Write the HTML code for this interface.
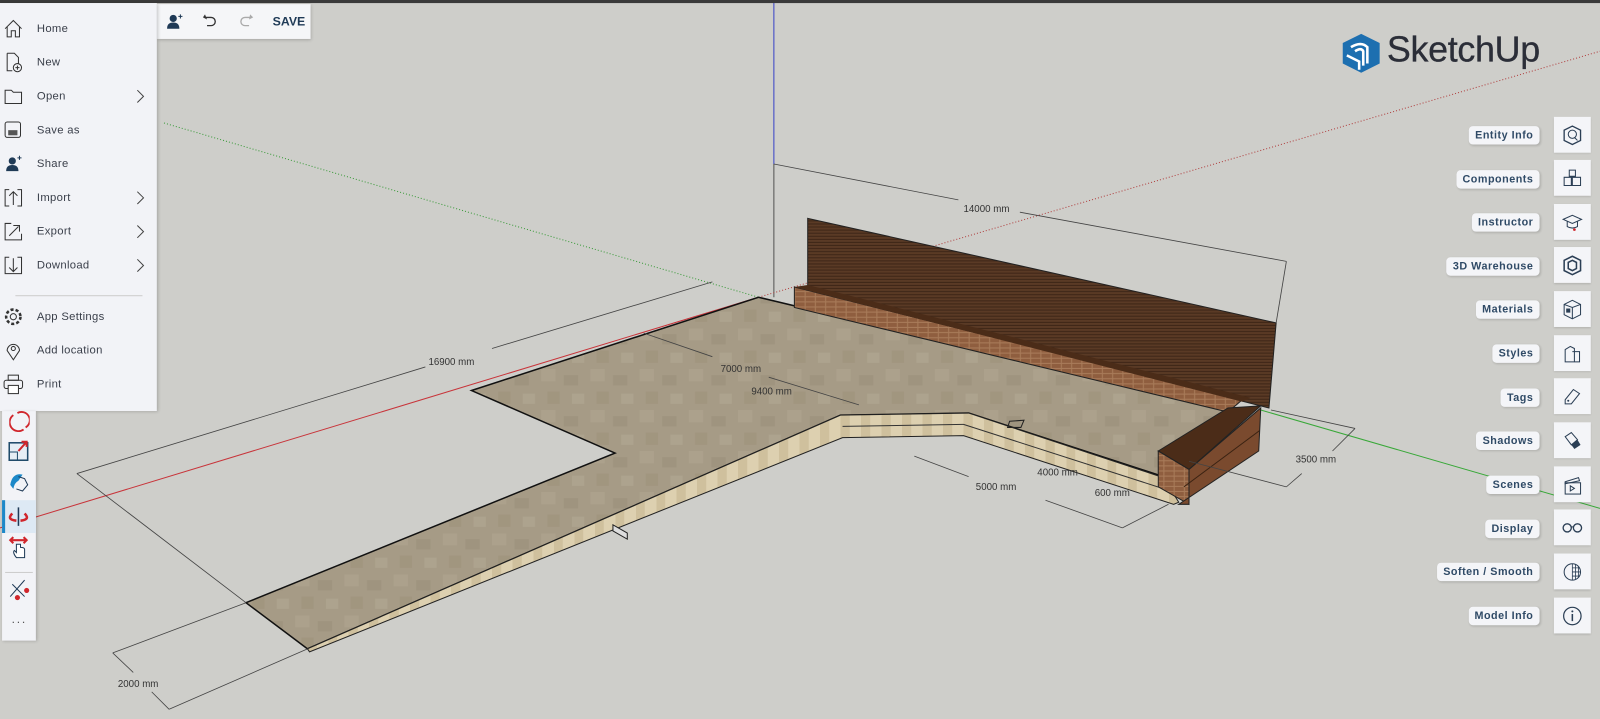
<!DOCTYPE html>
<html><head><meta charset="utf-8">
<style>
html,body{margin:0;padding:0;overflow:hidden;background:#cececa;width:1600px;height:719px}
#w{position:absolute;left:0;top:0;width:1561px;height:701px;transform:scale(1.025);transform-origin:0 0;background:#cececa;font-family:"Liberation Sans",sans-serif}
.top{position:absolute;left:0;top:0;width:1561px;height:3px;background:#3a3a3a}
.menu{position:absolute;left:0;top:3px;width:153px;height:398px;background:#f2f3f7;box-shadow:1px 1px 3px rgba(0,0,0,.2)}
.mi{position:absolute;left:0;width:153px;height:33px;font-size:11px;color:#3a3f4a;letter-spacing:.3px}
.mi span{position:absolute;left:36px;top:10px}
.mi svg{position:absolute;left:3px;top:6px}
.mi .ch{position:absolute;left:131px;top:6px}
.tb{position:absolute;left:153px;top:4px;width:150px;height:34px;background:#f5f6f8;box-shadow:1px 1px 3px rgba(0,0,0,.2)}
.lt{position:absolute;left:2px;top:401px;width:33px;height:224px;background:#f2f3f7;box-shadow:1px 1px 3px rgba(0,0,0,.2)}
.lab{position:absolute;right:59px;height:18px;background:#f4f5f8;border-radius:4px;font-size:10.5px;font-weight:bold;color:#2f4a66;padding:0 6px;line-height:18px;letter-spacing:.5px;box-shadow:1px 1px 2px rgba(0,0,0,.15)}
.ib{position:absolute;left:1516px;width:36px;height:35px;background:#f4f5f8;box-shadow:0 1px 2px rgba(0,0,0,.15)}
.ib svg{position:absolute;left:8px;top:8px}
</style></head><body><div id="w">
<svg width="1561" height="701" style="position:absolute;left:0;top:0">
<defs>
<pattern id="pave" width="48" height="40" patternUnits="userSpaceOnUse">
<rect width="48" height="40" fill="#a69b86"/>
<rect x="0" y="0" width="14" height="12" fill="#aca18c"/><rect x="22" y="6" width="14" height="10" fill="#9f947f"/>
<rect x="6" y="22" width="12" height="12" fill="#a1967f"/><rect x="30" y="24" width="12" height="10" fill="#ada38e"/>
</pattern>
<pattern id="wall" width="6" height="3" patternUnits="userSpaceOnUse">
<rect width="6" height="3" fill="#5a3a25"/><rect y="2" width="6" height="1" fill="#3e2617"/>
</pattern>
<pattern id="brick" width="10" height="5" patternUnits="userSpaceOnUse">
<rect width="10" height="5" fill="#8f5e3f"/><rect y="4" width="10" height="1" fill="#a97c5a"/><rect x="5" width="1" height="4" fill="#a97c5a"/>
</pattern>
<pattern id="step" width="20" height="10" patternUnits="userSpaceOnUse">
<rect width="20" height="10" fill="#ddd0b0"/><rect x="0" width="9" height="10" fill="#cfc09d"/>
</pattern>
</defs>
<line x1="755" y1="0" x2="755" y2="160" stroke="#3a44c8" stroke-width="1"/>
<line x1="755" y1="160" x2="755" y2="290" stroke="#555" stroke-width="1"/>
<line x1="0" y1="515" x2="740" y2="290" stroke="#c8343a" stroke-width="1"/>
<line x1="740" y1="290" x2="1561" y2="50" stroke="#b04040" stroke-width="1" stroke-dasharray="1,2"/>
<line x1="160" y1="120" x2="740" y2="290" stroke="#3a9a3a" stroke-width="1" stroke-dasharray="1,2"/>
<line x1="1230" y1="400" x2="1561" y2="496" stroke="#38a838" stroke-width="1"/>
<polygon points="460,381 740,290 1200,400 1135,440 1135,465 945,403 820,405 300,633 240,588 600,442" fill="url(#pave)" stroke="#111" stroke-width="1.5"/>
<polygon points="300,633 820,405 945,403 1135,466 1150,490 1145,492 940,425 822,427 302,636" fill="url(#step)" stroke="#222" stroke-width="1"/>
<line x1="822" y1="416" x2="940" y2="414" stroke="#333"/><line x1="940" y1="414" x2="1145" y2="480" stroke="#333"/>
<polygon points="598,512 612,520 612,526 598,518" fill="#ddd" stroke="#222"/>
<polygon points="788,213 1245,315 1238,398 788,283" fill="url(#wall)" stroke="#222"/>
<polygon points="775,280 1212,390 1198,402 775,300" fill="url(#brick)" stroke="#222"/>
<polygon points="775,280 788,278 1220,388 1212,392" fill="#4b2c18"/>
<polygon points="1130,440 1198,398 1230,396 1160,458" fill="#4b2c18" stroke="#222"/>
<polygon points="1130,440 1160,458 1160,492 1130,475" fill="url(#brick)" stroke="#222"/>
<polygon points="1160,458 1230,398 1228,440 1150,492 1160,492" fill="#7a4a2e" stroke="#222"/>
<line x1="1155" y1="475" x2="1229" y2="420" stroke="#3a2212"/>
<g stroke="#444" stroke-width=".8" fill="none">
<line x1="75" y1="462" x2="415" y2="358"/><line x1="480" y1="340" x2="695" y2="275"/>
<line x1="75" y1="462" x2="240" y2="588"/>
<line x1="110" y1="637" x2="240" y2="588"/><line x1="165" y1="692" x2="300" y2="633"/>
<line x1="110" y1="637" x2="130" y2="656"/><line x1="148" y1="675" x2="165" y2="692"/>
<line x1="755" y1="160" x2="935" y2="195"/><line x1="995" y1="207" x2="1255" y2="255"/>
<line x1="1255" y1="255" x2="1245" y2="315"/>
<line x1="628" y1="325" x2="695" y2="348"/><line x1="750" y1="368" x2="838" y2="395"/>
<line x1="1240" y1="400" x2="1322" y2="418"/><line x1="1322" y1="418" x2="1300" y2="440"/><line x1="1270" y1="462" x2="1255" y2="475"/><line x1="1160" y1="450" x2="1255" y2="475"/>
<line x1="892" y1="445" x2="945" y2="465"/><line x1="1020" y1="488" x2="1095" y2="515"/>
<line x1="1095" y1="515" x2="1140" y2="492"/>
</g>
<g font-size="9.5" fill="#333" font-family="Liberation Sans,sans-serif">
<text x="418" y="356">16900 mm</text><text x="115" y="670">2000 mm</text>
<text x="940" y="207">14000 mm</text><text x="703" y="363">7000 mm</text>
<text x="733" y="385">9400 mm</text><text x="1264" y="451">3500 mm</text>
<text x="952" y="478">5000 mm</text><text x="1012" y="464">4000 mm</text><text x="1068" y="484">600 mm</text>
</g>
<polygon points="985,411 999,410 996,417 983,417" fill="none" stroke="#222"/>
</svg>
<div class="top"></div>
<svg style="position:absolute;left:1308px;top:32px" width="42" height="40" viewBox="0 0 42 40">
<polygon points="20,1 38,10 38,30 20,39 2,30 2,10" fill="#1d6fb0"/>
<path d="M10,14 Q20,8 26,14 L26,30 M14,18 Q20,14 22,18 L22,32 M6,22 L18,28 L18,36" stroke="#fff" stroke-width="2.5" fill="none"/>
</svg>
<div style="position:absolute;left:1353px;top:29px;font-size:35px;color:#2b2e38;letter-spacing:-.3px;-webkit-text-stroke:.3px #2b2e38">SketchUp</div>
<div class="tb">
<svg style="position:absolute;left:9px;top:9px" width="18" height="16"><circle cx="7" cy="5" r="3.5" fill="#1f3a56"/><path d="M1,15 Q1,9 7,9 Q13,9 13,15Z" fill="#1f3a56"/><path d="M14,1v4M12,3h4" stroke="#1f3a56"/></svg>
<svg style="position:absolute;left:44px;top:9px" width="16" height="16"><path d="M3,4 H9 A4,4 0 0 1 9,12 H5" stroke="#333" stroke-width="1.3" fill="none"/><path d="M3,1 L1,4 L5,6Z" fill="#333"/></svg>
<svg style="position:absolute;left:79px;top:9px" width="16" height="16"><path d="M13,4 H7 A4,4 0 0 0 7,12 H11" stroke="#aaa" stroke-width="1.3" fill="none"/><path d="M12,1 L15,4 L11,6Z" fill="#aaa"/></svg>
<div style="position:absolute;left:113px;top:10px;font-size:12px;font-weight:bold;color:#1f3a56">SAVE</div>
</div>
<div class="menu">
<div class="mi" style="top:9px"><svg width="20" height="20"><path d="M2,10 L10,2 L18,10 M4,8 V18 H8 V12 H12 V18 H16 V8" stroke="#333" fill="none"/></svg><span>Home</span></div>
<div class="mi" style="top:42px"><svg width="20" height="20"><path d="M4,1 H11 L15,5 V11 M9,18 H4 V1" stroke="#333" fill="none"/><circle cx="14" cy="15" r="4" stroke="#333" fill="none"/><path d="M12,15h4M14,13v4" stroke="#333"/></svg><span>New</span></div>
<div class="mi" style="top:75px"><svg width="20" height="20"><path d="M2,4 H8 L10,6 H18 V17 H2Z" stroke="#333" fill="none"/></svg><span>Open</span><svg class="ch" width="12" height="20"><path d="M3,4 L9,10 L3,16" stroke="#444" fill="none"/></svg></div>
<div class="mi" style="top:108px"><svg width="20" height="20"><rect x="2" y="2" width="15" height="15" rx="2" stroke="#333" fill="none"/><rect x="5" y="10" width="9" height="5" fill="#555"/></svg><span>Save as</span></div>
<div class="mi" style="top:141px"><svg width="20" height="20"><circle cx="9" cy="7" r="3.5" fill="#1f3a56"/><path d="M3,17 Q3,11 9,11 Q15,11 15,17Z" fill="#1f3a56"/><path d="M16,2v4M14,4h4" stroke="#1f3a56"/></svg><span>Share</span></div>
<div class="mi" style="top:174px"><svg width="20" height="20"><path d="M6,2 H2 V18 H6 M14,2 H18 V18 H14 M10,17 V4 M6,8 L10,4 L14,8" stroke="#333" fill="none"/></svg><span>Import</span><svg class="ch" width="12" height="20"><path d="M3,4 L9,10 L3,16" stroke="#444" fill="none"/></svg></div>
<div class="mi" style="top:207px"><svg width="20" height="20"><path d="M8,2 H2 V18 H18 V12 M6,14 L15,5 M10,4 H16 V10" stroke="#333" fill="none"/></svg><span>Export</span><svg class="ch" width="12" height="20"><path d="M3,4 L9,10 L3,16" stroke="#444" fill="none"/></svg></div>
<div class="mi" style="top:240px"><svg width="20" height="20"><path d="M6,2 H2 V18 H18 V2 H14 M10,3 V16 M6,12 L10,16 L14,12" stroke="#333" fill="none"/></svg><span>Download</span><svg class="ch" width="12" height="20"><path d="M3,4 L9,10 L3,16" stroke="#444" fill="none"/></svg></div>
<div style="position:absolute;left:15px;top:285px;width:124px;height:1px;background:#ccc"></div>
<div class="mi" style="top:290px"><svg width="20" height="20"><circle cx="10" cy="10" r="3" stroke="#333" fill="none"/><circle cx="10" cy="10" r="7" stroke="#333" stroke-dasharray="3,2" stroke-width="2.5" fill="none"/></svg><span>App Settings</span></div>
<div class="mi" style="top:323px"><svg width="20" height="20"><path d="M10,19 L4,10 A6,6 0 1 1 16,10Z" stroke="#333" fill="none"/><circle cx="10" cy="8" r="2" stroke="#333" fill="none"/></svg><span>Add location</span></div>
<div class="mi" style="top:356px"><svg width="20" height="20"><rect x="5" y="1" width="10" height="5" stroke="#333" fill="none"/><rect x="1" y="6" width="18" height="8" rx="2" stroke="#333" fill="none"/><rect x="5" y="11" width="10" height="8" stroke="#333" fill="#fff"/></svg><span>Print</span></div>
</div>
<div class="lt">
<svg style="position:absolute;left:7px;top:0" width="20" height="22"><path d="M4,4 A8,8 0 0 0 14,18 M16,16 A8,8 0 0 0 8,2" stroke="#d0262c" stroke-width="1.8" fill="none"/></svg>
<svg style="position:absolute;left:6px;top:28px" width="22" height="22"><rect x="1" y="3" width="18" height="17" stroke="#1f4a6a" stroke-width="1.5" fill="#e6eef5"/><path d="M9,20 V12 H1" stroke="#1f4a6a" fill="none"/><path d="M10,11 L18,2 M13,2 H18 V7" stroke="#d0262c" stroke-width="2" fill="none"/></svg>
<svg style="position:absolute;left:6px;top:58px" width="22" height="22"><path d="M2,14 Q4,2 14,4 L10,10 Q6,12 5,18Z" fill="#1c88c8"/><path d="M10,6 L16,8 L19,14 L14,20 L8,18" stroke="#1f3a56" fill="none"/></svg>
<div style="position:absolute;left:0;top:87px;width:33px;height:32px;background:#dde9f4"></div>
<div style="position:absolute;left:0;top:87px;width:3px;height:32px;background:#1c88c8"></div>
<svg style="position:absolute;left:6px;top:92px" width="22" height="22"><path d="M10,2 V20" stroke="#1f3a56" stroke-width="1.5"/><path d="M4,8 Q-2,14 8,15 M16,8 Q22,14 12,15" stroke="#d0262c" stroke-width="2.5" fill="none"/></svg>
<svg style="position:absolute;left:6px;top:122px" width="22" height="24"><path d="M2,4 H18 M5,1 L2,4 L5,7 M15,1 L18,4 L15,7" stroke="#d0262c" stroke-width="2" fill="none"/><path d="M8,8 V16 L6,14 Q4,16 8,21 H16 V13 Q16,11 12,11 V8Z" stroke="#1f3a56" fill="#fff"/></svg>
<div style="position:absolute;left:3px;top:157px;width:27px;height:1px;background:#ccc"></div>
<svg style="position:absolute;left:6px;top:163px" width="22" height="22"><path d="M2,18 L16,2 M4,6 L16,18" stroke="#1f3a56"/><circle cx="18" cy="12" r="2.5" fill="#d0262c"/><circle cx="9" cy="19" r="2.5" fill="#d0262c"/></svg>
<div style="position:absolute;left:9px;top:198px;font-size:12px;color:#555;letter-spacing:1px">···</div>
</div>
<div class="lab" style="top:123px">Entity Info</div>
<div class="lab" style="top:166px">Components</div>
<div class="lab" style="top:208px">Instructor</div>
<div class="lab" style="top:251px">3D Warehouse</div>
<div class="lab" style="top:293px">Materials</div>
<div class="lab" style="top:336px">Styles</div>
<div class="lab" style="top:379px">Tags</div>
<div class="lab" style="top:421px">Shadows</div>
<div class="lab" style="top:464px">Scenes</div>
<div class="lab" style="top:507px">Display</div>
<div class="lab" style="top:549px">Soften / Smooth</div>
<div class="lab" style="top:592px">Model Info</div>
<div class="ib" style="top:114px"><svg width="20" height="20"><polygon points="10,1 18,5 18,15 10,19 2,15 2,5" stroke="#2b3f55" fill="none" stroke-width="1.3"/><circle cx="10" cy="9" r="4" stroke="#2b3f55" fill="none"/><path d="M12,12 L15,15" stroke="#2b3f55"/></svg></div>
<div class="ib" style="top:156px"><svg width="20" height="20"><path d="M7,2 L13,2 L13,8 L7,8Z M2,9 H9 V17 H2Z M10,9 H18 V17 H10Z" stroke="#2b3f55" fill="none"/></svg></div>
<div class="ib" style="top:199px"><svg width="20" height="20"><path d="M1,7 L10,3 L19,7 L10,11Z M5,9 V14 Q10,17 15,14 V9" stroke="#2b3f55" fill="none"/><circle cx="12" cy="17" r="1.3" fill="#d0262c"/></svg></div>
<div class="ib" style="top:241px"><svg width="20" height="20"><polygon points="10,1 18,5 18,15 10,19 2,15 2,5" stroke="#2b3f55" fill="none" stroke-width="1.5"/><polygon points="10,5 14,7 14,13 10,15 6,13 6,7" stroke="#2b3f55" fill="none" stroke-width="1.5"/></svg></div>
<div class="ib" style="top:284px"><svg width="20" height="20"><polygon points="10,1 18,5 18,15 10,19 2,15 2,5" stroke="#2b3f55" fill="none"/><path d="M10,8 V19 M2,5 L10,8 L18,5" stroke="#2b3f55" fill="none"/><rect x="4" y="9" width="4" height="4" fill="#2b3f55"/></svg></div>
<div class="ib" style="top:327px"><svg width="20" height="20"><path d="M3,6 L8,3 L12,5 V18 L3,18Z M10,8 H17 V18 H10" stroke="#2b3f55" fill="none"/></svg></div>
<div class="ib" style="top:369px"><svg width="20" height="20"><path d="M3,13 L11,3 L17,7 L9,17 L3,17Z" stroke="#2b3f55" fill="none"/><circle cx="6" cy="14" r="1" fill="#2b3f55"/></svg></div>
<div class="ib" style="top:412px"><svg width="20" height="20"><path d="M3,6 L9,2 L15,9 L9,14Z" stroke="#2b3f55" fill="none"/><path d="M9,14 L15,9 L18,14 L12,18Z" fill="#2b3f55"/></svg></div>
<div class="ib" style="top:455px"><svg width="20" height="20"><rect x="3" y="8" width="15" height="11" stroke="#2b3f55" fill="none"/><path d="M3,7 L16,3 L17,6 L3,9Z" stroke="#2b3f55" fill="none"/><path d="M8,11 L12,13.5 L8,16Z" stroke="#2b3f55" fill="none"/></svg></div>
<div class="ib" style="top:497px"><svg width="20" height="20"><circle cx="5" cy="10" r="4" stroke="#2b3f55" fill="none" stroke-width="1.3"/><circle cx="15" cy="10" r="4" stroke="#2b3f55" fill="none" stroke-width="1.3"/><path d="M9,9 H11" stroke="#2b3f55"/></svg></div>
<div class="ib" style="top:540px"><svg width="20" height="20"><circle cx="10" cy="10" r="8" stroke="#2b3f55" fill="none"/><path d="M10,2 V18 M10,6 H17 M10,10 H18 M10,14 H17 M13,3 V17 M16,5 V15" stroke="#2b3f55" stroke-width=".8"/></svg></div>
<div class="ib" style="top:583px"><svg width="20" height="20"><circle cx="10" cy="10" r="8.5" stroke="#2b3f55" fill="none" stroke-width="1.2"/><path d="M10,8 V15" stroke="#2b3f55" stroke-width="1.5"/><circle cx="10" cy="5.5" r="1" fill="#2b3f55"/></svg></div>
</div></body></html>
